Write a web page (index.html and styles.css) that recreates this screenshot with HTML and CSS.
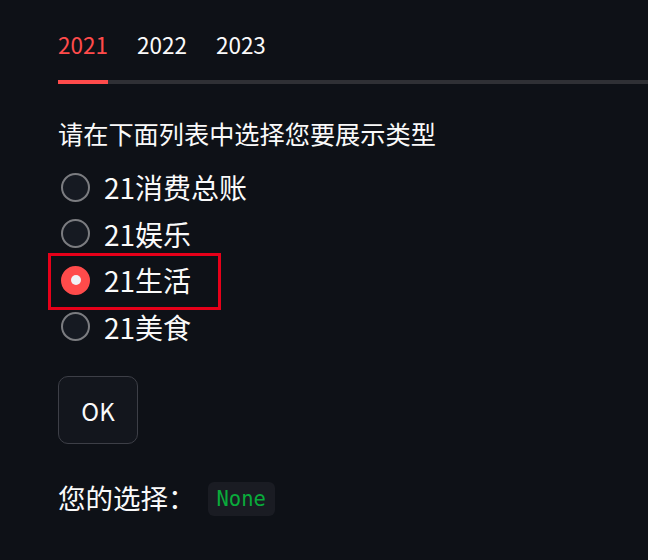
FILE: index.html
```html
<!DOCTYPE html>
<html lang="zh">
<head>
    <meta charset="UTF-8">
    <meta name="viewport" content="width=device-width, initial-scale=1.0">
    <title>类型选择</title>
    <link rel="stylesheet" href="styles.css">
</head>
<body>
    <div class="tabs">
        <div class="tab-list">
            <span class="tab active">2021</span>
            <span class="tab">2022</span>
            <span class="tab">2023</span>
        </div>
        <div class="tab-border"><div class="tab-highlight"></div></div>
    </div>

    <div class="panel">
        <p class="label">请在下面列表中选择您要展示类型</p>
        <div class="radio-group">
            <label class="radio"><span class="dot"></span>21消费总账</label>
            <label class="radio"><span class="dot"></span>21娱乐</label>
            <label class="radio checked"><span class="dot"></span>21生活</label>
            <label class="radio"><span class="dot"></span>21美食</label>
            <div class="mark"></div>
        </div>
        <button class="btn">OK</button>
        <p class="result"><span>您的选择：</span><code>None</code></p>
    </div>
</body>
</html>
```

FILE: styles.css
```css
body {
    margin: 0;
    padding: 0 0 0 58px;
    background: #0e1117;
    color: #fafafa;
    font-family: "Noto Sans CJK SC", "Noto Sans", sans-serif;
    overflow: hidden;
}
.tabs {
    padding-top: 27px;
}
.tab-list {
    display: flex;
    gap: 29px;
    font-size: 22.5px;
    line-height: 34px;
    padding-bottom: 19px;
}
.tab.active {
    color: #ff4b4b;
}
.tab-border {
    height: 4px;
    background: #2f3035;
    margin-right: -20px;
}
.tab-highlight {
    width: 50px;
    height: 4px;
    background: #ff4b4b;
}
.panel {
    padding-top: 30px;
}
.label {
    margin: 0 0 12px;
    font-size: 25.2px;
    line-height: 38px;
}
.radio-group {
    position: relative;
    display: flex;
    flex-direction: column;
}
.radio {
    display: flex;
    align-items: center;
    gap: 14px;
    height: 46.5px;
    font-size: 28px;
}
.dot {
    width: 25px;
    height: 25px;
    margin-left: 3px;
    border: 2px solid #7b7c80;
    border-radius: 50%;
    background: #161a22;
    display: flex;
    align-items: center;
    justify-content: center;
}
.checked .dot {
    border-color: #ff4b4b;
    background: #ff4b4b;
}
.checked .dot::after {
    content: "";
    width: 10px;
    height: 10px;
    border-radius: 50%;
    background: #f0f2f6;
}
.mark {
    position: absolute;
    left: -10px;
    top: 89px;
    width: 167px;
    height: 51px;
    border: 3px solid #e60019;
}
.btn {
    margin-top: 26px;
    width: 80px;
    height: 68px;
    border: 1px solid #3d3f47;
    border-radius: 10px;
    background: #13161d;
    color: #fafafa;
    font-family: "Noto Sans CJK SC", sans-serif;
    font-size: 24px;
}
.result {
    margin: 33px 0 0;
    font-size: 27.5px;
    line-height: 40px;
    display: flex;
    align-items: center;
    gap: 12px;
}
.result code {
    margin-top: 4px;
    font-family: "DejaVu Sans Mono", monospace;
    font-size: 20.5px;
    line-height: 26px;
    color: #09ab3b;
    background: #1a1c23;
    border-radius: 6px;
    padding: 4px 9px;
}
```
